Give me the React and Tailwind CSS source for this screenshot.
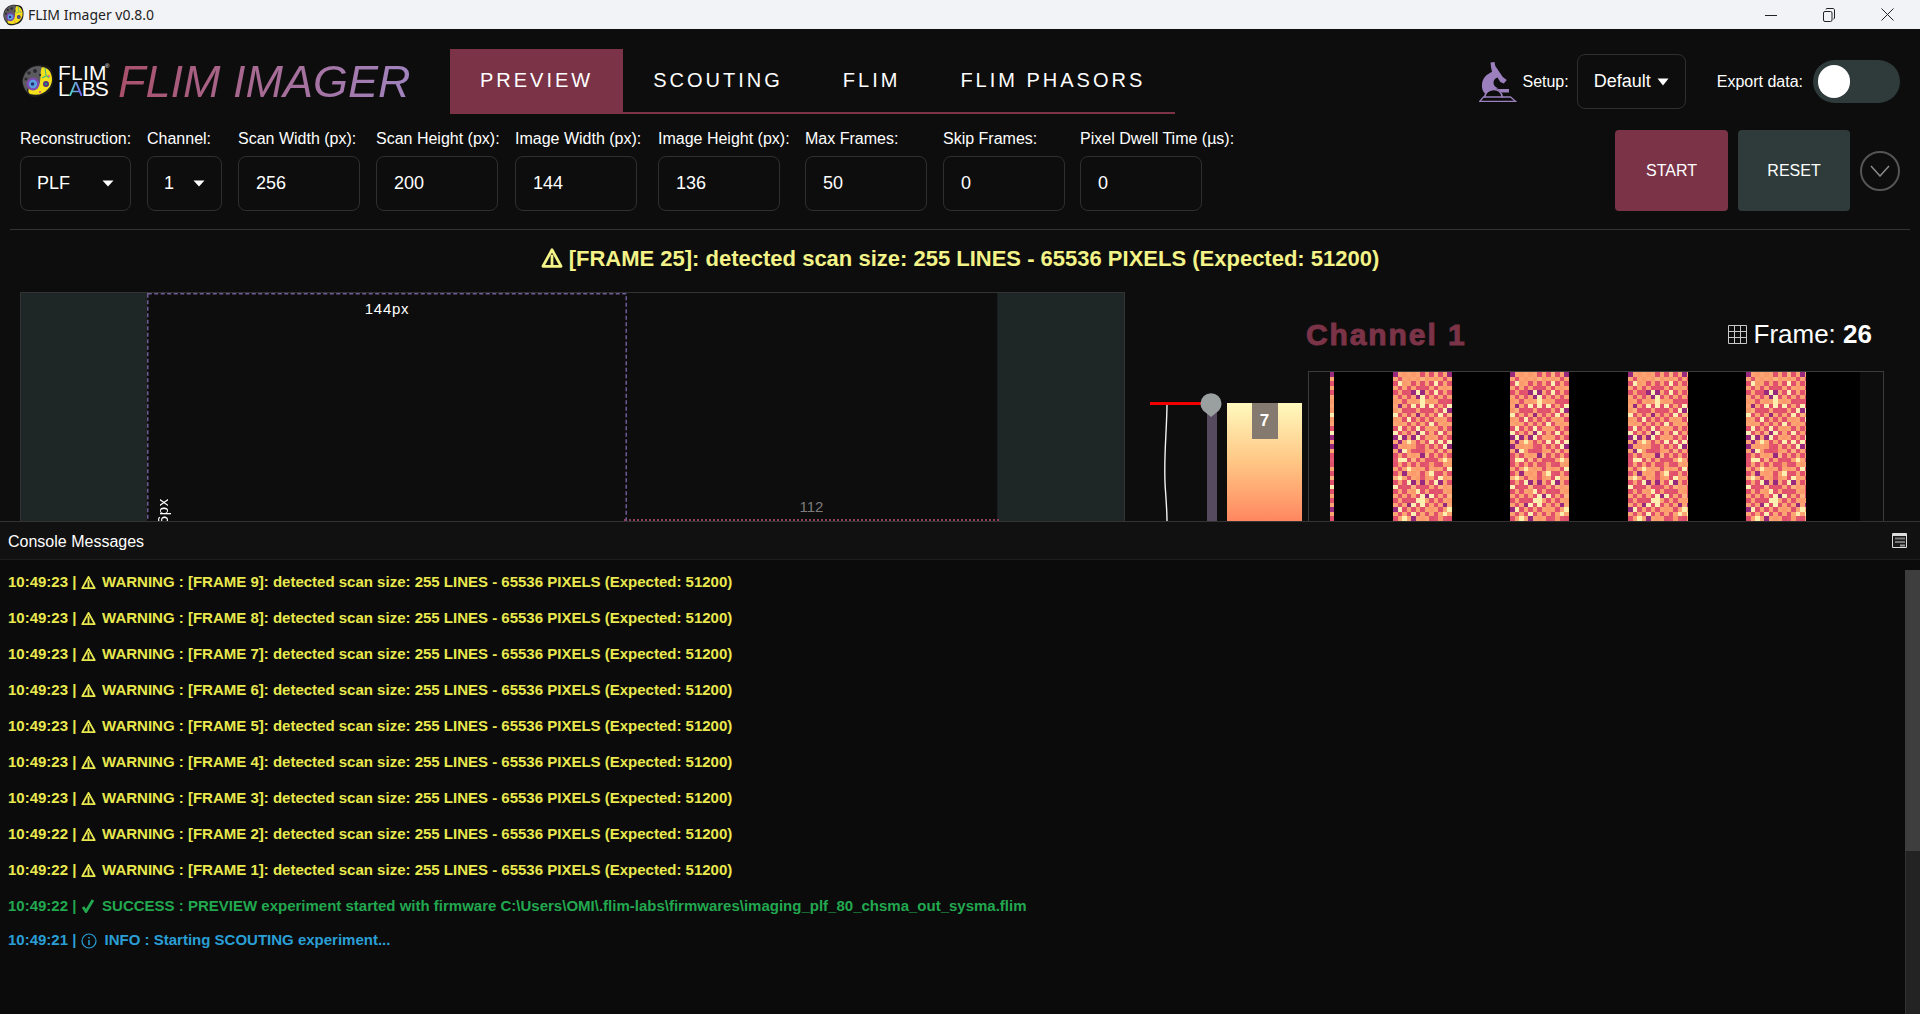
import React from "react";

const CellLogo = ({ size = 34 }) => (
  <svg width={size} height={size} viewBox="0 0 34 34" className="shrink-0">
    <path d="M3 12C5 5 12 1 19 1c5 0 10 1 12 4 2 4 3 9 2 14-1 7-6 12-13 13-6 2-11 1-13-3C3 25 1 18 3 12Z" fill="#1c1c1c" />
    <path d="M21 3c5 0 9 3 10 7 2 5 1 11-3 15-4 5-11 7-18 5-2-1-2-4-1-6 4 0 9-1 10-6 1-6 0-10 2-15Z" fill="#f4e11c" />
    <path d="M4 12C6 6 12 2 19 2l3 1c-2 5-1 9-2 15-1 5-6 6-11 6-3 1-2 4 0 5-3-1-5-5-6-9-1-3 0-6 1-8Z" fill="#5b5b5f" />
    <circle cx="9" cy="9" r="1.8" fill="#2b2b2d" />
    <circle cx="15" cy="7" r="2" fill="#2b2b2d" />
    <circle cx="6" cy="15" r="1.5" fill="#2b2b2d" />
    <circle cx="20" cy="11" r="1.2" fill="#2b2b2d" />
    <circle cx="13" cy="20" r="6.5" fill="#7d4bb0" />
    <circle cx="13" cy="20" r="4.2" fill="#5aa0e0" />
    <circle cx="12.5" cy="20" r="1.8" fill="#25306e" />
    <circle cx="26" cy="20" r="3" fill="#5a2d82" />
    <circle cx="26" cy="20" r="1.3" fill="#2a8a7a" />
    <path d="M25 4l1 7 3 3M22 14l4-2" stroke="#42b883" strokeWidth="1.1" fill="none" />
    <circle cx="20" cy="28" r="1" fill="#e0459a" />
    <circle cx="29" cy="12" r="0.9" fill="#e0459a" />
  </svg>
);

const Caret = ({ w = 12, h = 7 }) => (
  <svg width={w} height={h} viewBox="0 0 12 7" className="shrink-0" preserveAspectRatio="none">
    <path d="M0.5 0.5h11L6 6.5Z" fill="#fff" />
  </svg>
);

const Warn = ({ size = 16, color = "#e9e94f" }) => (
  <svg width={size} height={size} viewBox="0 0 16 16" className="shrink-0" fill="none" stroke={color}>
    <path d="M8 2 14.6 14H1.4Z" strokeWidth="2" strokeLinejoin="round" />
    <path d="M8 5.6v8" strokeWidth="2" />
  </svg>
);

const Microscope = () => (
  <svg width="38" height="40" viewBox="0 0 38 40" className="shrink-0">
    <path
      fill="#9b80bd"
      d="M11.500.5l4-.5.8 4 7.500 11 4 3-3 3.500-3.500-1.500-2.800-4.500c-2.500.8-4 2.700-4 5.200 0 2.800 2 4.800 5 5.500-2.500.8-8.500 1.800-13 5.800-3-2.500-4-6-3.500-10 .5-6 5-10 10-12l-1-5Z"
    />
    <path fill="#9b80bd" d="M17 27h13v3.500h-8c-1.500-1.800-3-2.800-5-3.500Z" />
    <path d="M5.500 35.500C6.500 30 10 27.500 14.500 27.500s8 2.500 9 8" stroke="#9b80bd" strokeWidth="1.500" fill="none" />
    <path d="M4.500 35h27l5 4.300H.8Z" stroke="#9b80bd" strokeWidth="1.300" fill="none" />
  </svg>
);

const Field = ({ label, value, select, className = "" }) => (
  <div className={`flex flex-col ${className}`}>
    <div className="h-6 leading-6 text-base text-white mb-[5px] whitespace-nowrap">{label}</div>
    <div
      className={`h-[55px] rounded-lg border border-[#2f2f2f] flex items-center text-[18px] text-white ${
        select ? "justify-between pl-4 pr-4" : "pl-[17px] w-[122px]"
      }`}
    >
      <span>{value}</span>
      {select && <Caret />}
    </div>
  </div>
);

let seed = 20240611;
const rnd = () => {
  seed = (seed + 0x6d2b79f5) | 0;
  let t = Math.imul(seed ^ (seed >>> 15), 1 | seed);
  t = (t + Math.imul(t ^ (t >>> 7), 61 | t)) ^ t;
  return ((t ^ (t >>> 14)) >>> 0) / 4294967296;
};
const pickColor = (even) => {
  const r = rnd();
  if (even) {
    if (r < 0.62) return "#e0506c";
    if (r < 0.86) return "#fb9b6c";
    if (r < 0.95) return "#98297f";
    return "#fcefae";
  }
  if (r < 0.62) return "#fca572";
  if (r < 0.82) return "#fdf0b2";
  if (r < 0.94) return "#e2566e";
  return "#feb47e";
};
const texture = [];
for (let c = 0; c < 14; c++) {
  const col = [];
  for (let r = 0; r < 34; r++) col.push(pickColor((r + c) % 2 === 0));
  texture.push(col);
}
const stripes = [
  [21, 4],
  [84, 59],
  [201, 59],
  [319, 60],
  [437, 60],
];

const Heatmap = () => (
  <svg width="551" height="149" viewBox="0 0 551 149" shapeRendering="crispEdges" className="block">
    <rect x="21" width="530" height="149" fill="#000" />
    {stripes.map(([x, w], s) => (
      <svg key={s} x={x} y="0" width={w} height="149" viewBox={`0 0 ${w} 149`}>
        {texture.map((col, c) =>
          col.map((fill, r) => <rect key={`${c}-${r}`} x={c * 4.5} y={r * 4.5} width="4.5" height="4.5" fill={fill} />)
        )}
      </svg>
    ))}
  </svg>
);

const PREFIX = "detected scan size: 255 LINES - 65536 PIXELS (Expected: 51200)";
const logs = [
  ["10:49:23", 9],
  ["10:49:23", 8],
  ["10:49:23", 7],
  ["10:49:23", 6],
  ["10:49:23", 5],
  ["10:49:23", 4],
  ["10:49:23", 3],
  ["10:49:22", 2],
  ["10:49:22", 1],
];

const LogRow = ({ time, icon, text, color, className = "h-9", iconClass = "w-[21.500px]" }) => (
  <div className={`flex items-center pl-2 text-[15px] font-bold whitespace-pre ${className}`} style={{ color }}>
    <span>{time} | </span>
    <span className={`flex items-center ${iconClass}`}>{icon}</span>
    <span>{text}</span>
  </div>
);

export default function App() {
  return (
    <div className="w-[1920px] h-[1014px] flex flex-col overflow-hidden bg-[#0d0d0d] text-white [font-family:'Liberation_Sans',Arial,sans-serif]">
      {/* window chrome */}
      <div className="h-[29px] shrink-0 bg-[#f2f3f6] flex items-center pl-[2px] text-[#222]">
        <CellLogo size={22} />
        <span className="ml-[4px] text-[14px] [font-family:'Noto_Sans',sans-serif]">FLIM Imager v0.8.0</span>
        <div className="ml-auto flex items-center pr-[26px] gap-[46px]">
          <svg width="12" height="12" viewBox="0 0 12 12" stroke="#222" fill="none"><path d="M0 6.500h12" /></svg>
          <svg width="12" height="14" viewBox="0 0 12 14" stroke="#222" fill="none">
            <rect x="0.500" y="3.500" width="8.500" height="10" rx="1.500" />
            <path d="M3 1.500c0-.6.4-1 1-1h6c.8 0 1.500.7 1.500 1.500v8c0 .6-.4 1-1 1" />
          </svg>
          <svg width="13" height="13" viewBox="0 0 13 13" stroke="#222" fill="none"><path d="M.500.500l12 12M12.500.500l-12 12" /></svg>
        </div>
      </div>

      {/* header */}
      <div className="h-[85px] shrink-0 flex pl-5 pr-5">
        <div className="w-[430px] shrink-0 flex items-center pt-[19px]">
          <CellLogo size={34} />
          <div className="ml-[4px] w-[56px] shrink-0 flex flex-col text-[21px] leading-[16.500px] font-normal">
            <span className="relative tracking-[0.2px]">
              FLIM<span className="absolute top-[-7px] left-[47px] text-[6px]">®</span>
            </span>
            <span className="tracking-[-1px]">
              L
              <span className="text-transparent bg-clip-text bg-linear-to-r from-[#3fe0c0] to-[#7a5cf0]">A</span>
              BS
            </span>
          </div>
          <span className="ml-[4px] pr-1 text-[45px] leading-none italic text-transparent bg-clip-text bg-linear-to-r from-[#a9506b] to-[#a084c0]">
            FLIM IMAGER
          </span>
        </div>
        <div className="flex pt-5 h-[85px]">
          <div className="flex border-b-2 border-[#7a3347] text-[20px] tracking-[3px] h-[65px]">
            <div className="px-[30px] flex items-center bg-[#7a3347] pb-[2px]">PREVIEW</div>
            <div className="px-[30px] flex items-center pb-[2px]">SCOUTING</div>
            <div className="px-[30px] flex items-center pb-[2px]">FLIM</div>
            <div className="px-[30px] flex items-center pb-[2px]">FLIM PHASORS</div>
          </div>
        </div>
        <div className="ml-auto flex items-center h-[55px] mt-[25px]">
          <Microscope />
          <span className="ml-[5px] text-base">Setup:</span>
          <div className="ml-2 w-[109px] h-[55px] rounded-lg border border-[#2f2f2f] flex items-center pl-4 text-[18px] gap-[6px]">
            Default
            <Caret w={12} h={8} />
          </div>
          <span className="ml-[31px] text-base">Export data:</span>
          <div className="ml-[10px] w-[87px] h-[43px] rounded-full bg-[#2e3b3a] flex items-center pl-[5px]">
            <div className="w-8 h-[33px] rounded-full bg-white" />
          </div>
        </div>
      </div>

      {/* controls */}
      <div className="shrink-0 flex items-end px-5 pt-[13px] gap-4">
        <Field label="Reconstruction:" value="PLF" select className="w-[111px]" />
        <Field label="Channel:" value="1" select className="w-[75px]" />
        <Field label="Scan Width (px):" value="256" className="w-[122px]" />
        <Field label="Scan Height (px):" value="200" className="w-[123px]" />
        <Field label="Image Width (px):" value="144" className="w-[127px]" />
        <Field label="Image Height (px):" value="136" className="w-[131px]" />
        <Field label="Max Frames:" value="50" className="w-[122px]" />
        <Field label="Skip Frames:" value="0" className="w-[121px]" />
        <Field label="Pixel Dwell Time (µs):" value="0" className="w-[121px]" />
        <div className="ml-auto flex items-center gap-[10px]">
          <div className="w-[113px] h-[81px] rounded bg-[#7a3347] flex items-center justify-center text-base">START</div>
          <div className="w-[112px] h-[81px] rounded bg-[#2e3b3a] flex items-center justify-center text-base">RESET</div>
          <div className="w-10 h-10 rounded-full border-2 border-[#555] flex items-center justify-center">
            <svg width="20" height="12" viewBox="0 0 20 12" fill="none" stroke="#8a8a8a" strokeWidth="1.500"><path d="M1 1l9 10 9-10" /></svg>
          </div>
        </div>
      </div>
      <div className="shrink-0 h-px mt-[18px] mx-[10px] bg-[#333]" />

      {/* alert */}
      <div className="shrink-0 h-[62px] pb-[6px] flex items-center justify-center text-[22px] font-bold text-[#f3f388] gap-[6px]">
        <Warn size={22} color="#f3f388" />
        <span>[FRAME 25]: {PREFIX}</span>
      </div>

      {/* preview */}
      <div className="h-[229px] shrink-0 flex overflow-hidden">
        <div className="ml-5 w-[1105px] h-[240px] border border-[#333] flex relative">
          <div className="w-[126px] bg-[#1f2626]" />
          <div className="flex-1" />
          <div className="w-[127px] bg-[#1f2626] border-l border-[#1a1e1e]" />
          <svg width="480" height="240" viewBox="0 0 480 240" fill="none" className="absolute left-[126px] top-0">
            <rect x="0.750" y="0.750" width="478.500" height="238.500" stroke="#6f5c96" strokeWidth="1.500" strokeDasharray="4 2.500" />
          </svg>
          <div className="absolute left-[126px] top-[5px] w-[480px] text-center text-[15px] tracking-[0.7px]">144px</div>
          <div className="absolute left-[134px] top-[205px] w-4 [writing-mode:vertical-rl] rotate-180 text-[15px] whitespace-nowrap leading-4 tracking-[0.7px]">136px</div>
          <div className="absolute left-[603px] top-[226px] w-[375px] h-[2px] border-t-2 border-dotted border-[#8e3e5c]" />
          <div className="absolute left-[603px] top-[203px] w-[375px] text-center text-[15px] text-[#7b7b7b]">112</div>
        </div>
        <div className="flex-1 flex flex-col pl-[25px]">
          <div className="pt-[28px] pl-[156px] pr-[48px] flex items-center justify-between h-[58px]">
            <span className="text-[30px] leading-[30px] font-bold text-[#7a3347] tracking-[1.900px] [-webkit-text-stroke:1px_#7a3347]">Channel 1</span>
            <div className="flex items-center text-[26px] leading-[30px] mb-[3px]">
              <svg width="19" height="19" viewBox="0 0 19 19" fill="none" stroke="#c9c9c9" className="mr-[7px] mt-[2px]">
                <path d="M.5.500h18v18H.5ZM6.500.500v18M12.500.500v18M.5 6.500h18M.5 12.500h18" />
              </svg>
              Frame:&nbsp;<span className="font-bold">26</span>
            </div>
          </div>
          <div className="mt-[21px] flex h-[150px]">
            <svg width="72" height="150" viewBox="0 0 72 150" className="shrink-0">
              <path d="M17 32C17 60 13 90 15.500 120c1 14 1.500 22 1.500 30" stroke="#f2f2f2" strokeWidth="1.400" fill="none" />
              <rect x="57" y="40" width="10" height="110" fill="#564a5e" />
              <path d="M0 32.500h52" stroke="#f20000" strokeWidth="3" />
              <path d="M61 46 53 39.500a10.500 10.500 0 1 1 16 0Z" fill="#9a9f9f" />
            </svg>
            <div className="ml-[5px] mt-8 w-[75px] h-[118px] relative bg-linear-to-b from-[#fff9bd] via-[#ffc684] to-[#ff8660] flex justify-center">
              <div className="w-[26px] h-9 bg-[#857a70] flex items-center justify-center font-bold text-[17px]">7</div>
            </div>
            <div className="ml-[6px] w-[576px] h-[170px] border border-[#3a3a3a] shrink-0">
              <Heatmap />
            </div>
          </div>
        </div>
      </div>

      {/* console */}
      <div className="flex-1 min-h-0 flex flex-col border-t border-[#333] relative">
        <div className="h-[38px] shrink-0 bg-[#111] border-b border-[#1e1e1e] flex items-center justify-between pl-2 pr-[13px] text-base">
          <span className="pt-[3px]">Console Messages</span>
          <svg width="15" height="15" viewBox="0 0 15 15">
            <rect width="15" height="15" rx="1" fill="#dcdcdc" />
            <rect x="1" y="3" width="13" height="11" fill="#1a1a1a" />
            <rect x="3" y="4.500" width="10" height="2" fill="#777" />
            <rect x="3" y="8" width="10" height="2" fill="#777" />
            <rect x="8" y="11.500" width="5" height="2" fill="#999" />
          </svg>
        </div>
        <div className="flex-1 min-h-0 flex bg-[#0b0b0b]">
          <div className="flex-1 pt-1">
            {logs.map(([t, n]) => (
              <LogRow
                key={n}
                time={t}
                color="#e9e94f"
                icon={<Warn size={15} color="#e9e94f" />}
                text={`WARNING : [FRAME ${n}]: ${PREFIX}`}
              />
            ))}
            <LogRow
              time="10:49:22"
              color="#22a84f"
              icon={
                <svg width="14" height="14" viewBox="0 0 14 14" fill="none" stroke="#22a84f" strokeWidth="2.800"><path d="M2 8l3 4.500L12 1" /></svg>
              }
              text={"SUCCESS : PREVIEW experiment started with firmware C:\\Users\\OMI\\.flim-labs\\firmwares\\imaging_plf_80_chsma_out_sysma.flim"}
            />
            <LogRow
              time="10:49:21"
              color="#2a9fd6"
              className="h-[33px]"
              iconClass="w-[24px]"
              icon={
                <svg width="16" height="16" viewBox="0 0 16 16" fill="none" stroke="#2a9fd6" strokeWidth="1.200">
                  <circle cx="8" cy="8" r="7" />
                  <path d="M8 7v5M8 4v1.600" strokeWidth="1.500" />
                </svg>
              }
              text="INFO : Starting SCOUTING experiment..."
            />
          </div>
          <div className="w-[15px] shrink-0 mt-[10px] flex flex-col">
            <div className="h-[281px] bg-[#3e3e3e]" />
            <div className="flex-1 bg-[#232323] border-l border-[#333]" />
          </div>
        </div>
      </div>
    </div>
  );
}
